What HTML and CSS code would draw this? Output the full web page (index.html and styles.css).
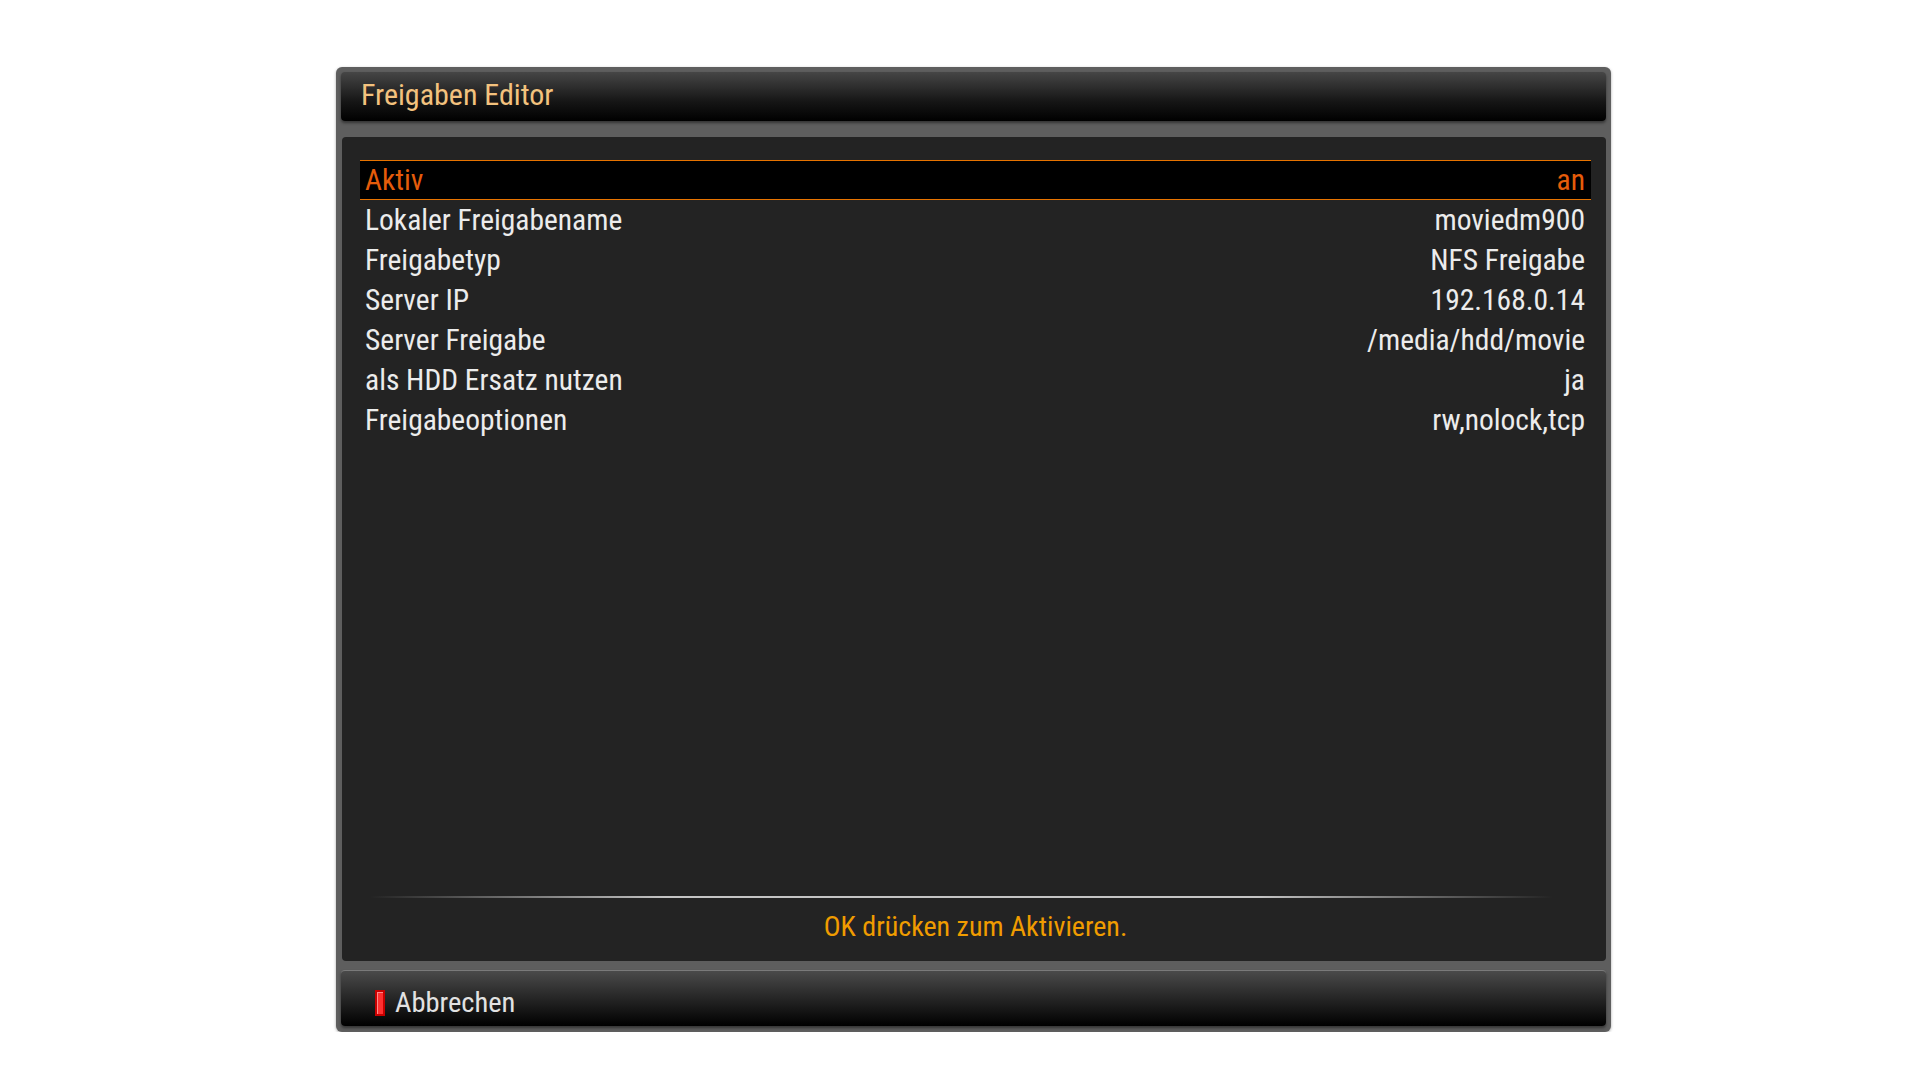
FILE: index.html
```html
<!DOCTYPE html>
<html lang="de">
  <head>
    <meta charset="UTF-8" />
    <title>Freigaben Editor</title>
    <link rel="stylesheet" href="styles.css">
  </head>
  <body>
    <div class="window">
      <div class="titlebar">Freigaben Editor</div>
      <div class="panel">
        <ul class="config-list">
          <li class="row selected"><span>Aktiv</span><span>an</span></li>
          <li class="row"><span>Lokaler Freigabename</span><span>moviedm900</span></li>
          <li class="row"><span>Freigabetyp</span><span>NFS Freigabe</span></li>
          <li class="row"><span>Server IP</span><span>192.168.0.14</span></li>
          <li class="row"><span>Server Freigabe</span><span>/media/hdd/movie</span></li>
          <li class="row"><span>als HDD Ersatz nutzen</span><span>ja</span></li>
          <li class="row"><span>Freigabeoptionen</span><span>rw,nolock,tcp</span></li>
        </ul>
        <div class="separator"></div>
        <div class="hint">OK drücken zum Aktivieren.</div>
      </div>
      <div class="buttonbar">
        <span class="key red"></span>
        <span class="key-label">Abbrechen</span>
      </div>
    </div>
  </body>
</html>
```

FILE: styles.css
```css
body {
  margin: 0;
  padding: 67px 0 0 336px;
  background: #fff;
  font-family: Roboto, "Liberation Sans", sans-serif;
  font-stretch: condensed;
}

.window {
  width: 1275px;
  box-sizing: border-box;
  padding: 5px 5px 6px 5px;
  background: #5e5e5e;
  border-radius: 6px;
  box-shadow: 0 1px 3px rgba(0, 0, 0, 0.35);
}

.titlebar {
  height: 49px;
  line-height: 45px;
  padding-left: 20px;
  font-size: 30px;
  color: #f3c27e;
  background: linear-gradient(#464646, #161616 60%, #000);
  border-radius: 4px;
  box-shadow: 0 2px 3px rgba(0, 0, 0, 0.45);
}

.panel {
  margin-top: 16px;
  margin-left: 1px;
  height: 824px;
  box-sizing: border-box;
  padding: 23px 15px 0 18px;
  background: #232323;
  border-radius: 4px;
  display: flex;
  flex-direction: column;
}

.config-list {
  list-style: none;
  margin: 0;
  padding: 0;
  flex: 1;
}

.row {
  display: flex;
  justify-content: space-between;
  height: 40px;
  line-height: 40px;
  padding: 0 6px 0 5px;
  font-size: 29.5px;
  color: #ececec;
}

.row.selected {
  box-sizing: border-box;
  background: #000;
  border-top: 1px solid #e77300;
  border-bottom: 1px solid #e77300;
  line-height: 38px;
  color: #e65c0a;
}

.separator {
  height: 2px;
  margin: 0 38px 0 10px;
  background: linear-gradient(90deg, rgba(200, 200, 200, 0), #c4c4c4 25%, #c4c4c4 75%, rgba(200, 200, 200, 0));
}

.hint {
  height: 63px;
  line-height: 58px;
  text-align: center;
  font-size: 28px;
  color: #f09c00;
}

.buttonbar {
  margin-top: 9px;
  height: 56px;
  box-sizing: border-box;
  padding: 8px 0 0 34px;
  display: flex;
  align-items: center;
  gap: 10px;
  background: linear-gradient(#4a4a4a, #1e1e1e 60%, #000);
  border-top: 1px solid #7a7a7a;
  border-radius: 4px;
  box-shadow: 0 2px 3px rgba(0, 0, 0, 0.45);
}

.key {
  width: 10px;
  height: 26px;
  margin-top: 1px;
  box-sizing: border-box;
}

.key.red {
  background: #ff3030;
  border: 2px solid #c80000;
  box-shadow: inset 1px 1px 0 #ff8a8a;
}

.key-label {
  font-size: 28.5px;
  line-height: 44px;
  color: #e2e2e2;
}
```
